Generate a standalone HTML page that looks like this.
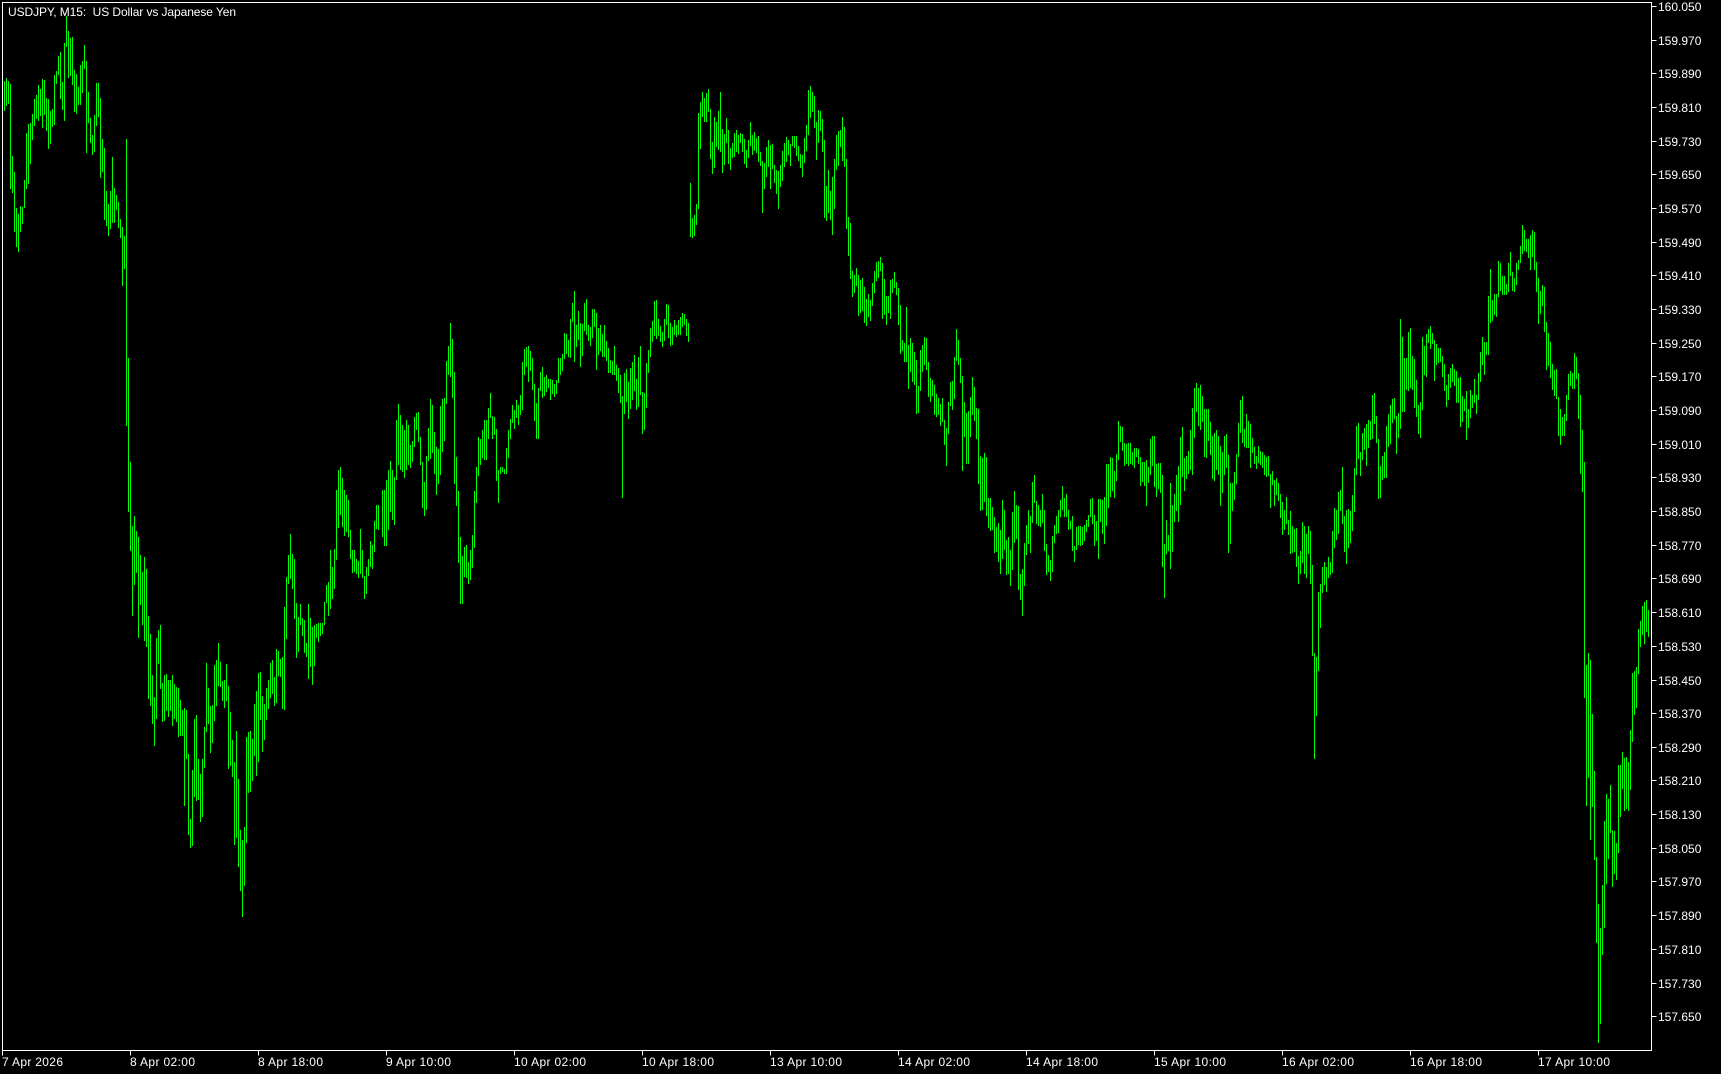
<!DOCTYPE html>
<html><head><meta charset="utf-8"><title>USDJPY, M15</title>
<style>
html,body{margin:0;padding:0;background:#000;width:1721px;height:1074px;overflow:hidden}
svg{display:block;position:absolute;left:0;top:0}
text{font-family:"Liberation Sans",sans-serif;font-size:12px;fill:#fff}
</style></head><body>
<svg width="1721" height="1074" viewBox="0 0 1721 1074" xmlns="http://www.w3.org/2000/svg">
<rect width="1721" height="1074" fill="#000"/>
<path transform="translate(.5 0)" shape-rendering="crispEdges" fill="none" stroke="#00ff00" stroke-width="1" d="M4 81V111M6 78V106M8 81V104M10 84V189M12 156V193M14 172V232M16 208V247M18 214V252M20 206V232M22 207V224M24 180V208M26 133V189M28 124V184M30 123V164M32 114V140M34 99V126M36 95V119M38 85V121M40 89V116M42 79V128M44 80V115M46 98V131M48 99V149M50 111V144M52 109V127M54 75V125M56 71V84M58 56V75M60 52V99M62 82V110M64 43V121M66 16V47M68 31V78M70 38V76M72 37V85M74 70V112M76 74V114M78 87V105M80 65V105M82 61V93M84 45V69M86 61V153M88 92V123M90 118V143M92 135V155M94 115V152M96 83V126M98 83V117M100 98V178M102 139V172M104 148V220M106 191V226M108 204V236M110 191V229M112 157V223M114 188V223M116 195V210M118 202V228M120 219V238M122 227V286M124 236V269M126 139V426M128 358V512M130 462V551M132 526V616M134 516V585M136 531V573M138 537V638M140 555V605M142 572V625M144 557V641M146 569V647M148 616V699M150 634V706M152 675V724M154 697V746M156 638V719M158 630V664M160 625V689M162 683V722M164 675V721M166 674V711M168 680V717M170 680V711M172 675V726M174 684V719M176 687V722M178 688V737M180 700V736M182 710V736M184 708V806M186 710V759M188 754V835M190 819V848M192 770V846M194 719V797M196 715V801M198 759V800M200 774V822M202 759V817M204 727V768M206 663V732M208 688V724M210 706V753M212 705V743M214 665V721M216 660V706M218 643V686M220 662V687M222 681V701M224 680V708M226 664V701M228 686V769M230 712V766M232 740V777M234 762V845M236 731V838M238 779V867M240 830V891M242 840V917M244 827V886M246 737V843M248 732V793M250 731V792M252 739V781M254 704V756M256 691V776M258 673V762M260 672V720M262 696V752M264 704V740M266 688V720M268 680V709M270 663V698M272 660V694M274 677V706M276 649V703M278 651V676M280 659V677M282 657V709M284 607V710M286 577V639M288 555V584M290 534V579M292 554V589M294 559V619M296 603V658M298 617V652M300 604V625M302 618V636M304 620V653M306 643V657M308 604V679M310 618V667M312 627V685M314 625V666M316 624V638M318 623V642M320 623V636M322 623V634M324 602V625M326 585V603M328 582V616M330 550V609M332 567V599M334 549V589M336 490V560M338 470V528M340 467V515M342 478V527M344 490V536M346 495V532M348 500V537M350 530V559M352 550V573M354 550V572M356 559V574M358 561V578M360 529V574M362 550V578M364 576V599M366 567V594M368 559V576M370 541V567M372 545V569M374 521V552M376 505V529M378 505V530M382 490V537M384 490V546M386 480V546M388 470V530M390 461V512M392 470V520M394 477V525M396 420V480M398 404V465M400 415V470M402 425V472M404 430V478M406 420V470M408 425V465M410 445V468M412 441V462M414 417V447M416 413V430M418 412V442M420 437V465M422 462V508M424 482V516M426 456V510M428 428V461M430 399V459M432 405V453M434 432V474M436 447V495M438 449V484M440 406V475M442 399V452M444 398V441M446 361V404M448 346V375M450 323V377M452 339V398M454 372V484M456 457V506M458 491V563M460 537V604M462 556V604M464 547V577M466 545V578M468 562V584M470 550V580M472 535V568M474 491V548M476 467V503M478 437V476M480 439V465M482 430V458M484 420V460M486 420V460M488 408V439M490 393V418M492 416V439M494 417V435M496 429V481M498 470V503M500 467V474M502 467V472M504 469V474M506 448V474M508 430V458M510 419V439M512 405V423M514 410V429M516 400V418M518 405V425M520 395V415M522 362V410M524 349V375M526 347V367M528 346V382M530 351V371M532 358V390M534 384V421M536 403V439M538 388V439M540 372V391M542 367V398M544 377V396M546 375V392M548 379V388M550 379V400M552 380V394M554 384V397M556 380V394M558 358V383M560 358V375M562 354V371M564 333V359M566 334V354M568 340V357M570 319V358M572 303V322M574 291V362M576 325V347M578 311V340M580 323V367M582 324V356M584 303V331M586 299V335M588 325V341M590 327V346M592 309V338M594 309V327M596 313V370M598 328V355M600 325V351M602 334V357M604 325V357M606 341V361M608 348V373M610 360V373M612 361V375M614 346V375M616 365V381M618 368V393M620 375V403M622 396V498M624 373V414M626 369V402M628 382V419M630 368V409M632 362V400M634 355V391M636 379V410M638 357V407M640 346V395M642 392V434M644 393V430M646 363V408M648 350V373M650 328V357M652 321V342M654 301V336M656 300V339M658 319V336M660 326V342M662 332V347M664 319V341M666 304V325M668 305V338M670 323V346M672 327V345M674 320V335M676 325V337M678 320V335M680 317V335M682 313V327M684 314V325M686 319V336M688 323V342M690 183V237M692 218V238M694 215V236M696 204V225M698 113V209M700 102V149M702 92V117M704 98V122M706 93V122M708 89V112M710 109V159M712 142V174M714 117V168M716 122V147M718 111V150M720 92V152M722 129V173M724 134V165M726 118V143M728 130V164M730 148V170M732 143V158M734 133V157M736 130V152M738 135V154M740 133V143M742 134V152M744 139V164M746 150V168M748 140V158M750 122V146M752 135V155M754 132V151M756 138V153M758 136V162M760 152V166M762 161V213M764 163V189M766 147V177M768 140V167M770 145V189M772 144V169M774 165V183M776 170V194M778 171V209M780 165V187M782 151V181M784 143V167M786 137V162M788 140V155M790 144V166M792 136V146M794 136V148M796 136V156M798 146V161M800 154V168M802 155V177M804 138V163M806 125V151M808 90V135M810 86V118M812 92V112M814 96V128M816 122V160M818 110V143M820 111V131M822 119V152M824 140V218M826 186V221M828 170V213M830 191V220M832 177V235M834 159V209M836 135V170M838 131V166M840 130V147M842 117V161M844 127V167M846 159V229M848 217V256M850 223V279M852 271V297M854 275V293M856 268V286M858 275V316M860 280V313M862 278V311M864 287V323M866 299V326M868 294V317M870 300V321M872 283V306M874 271V293M876 262V281M878 261V278M880 257V271M882 263V319M884 279V315M886 296V325M888 296V313M890 280V319M892 279V293M894 272V288M896 282V295M898 288V325M900 305V354M902 340V351M904 343V362M906 307V362M908 345V389M910 338V372M912 343V382M914 352V385M916 360V414M918 386V413M920 350V391M922 345V372M924 337V365M926 338V370M928 362V397M930 378V402M932 380V396M934 385V415M936 394V417M938 398V415M940 404V426M942 398V422M944 420V445M946 428V466M948 402V434M950 382V406M952 381V410M954 357V399M956 329V361M958 340V365M960 358V383M962 376V471M964 402V437M966 413V464M968 411V464M970 397V437M972 377V415M974 387V421M976 408V439M978 409V484M980 456V511M982 458V510M984 453V502M986 457V516M988 498V528M990 498V531M992 507V530M994 517V553M996 527V552M998 523V562M1000 530V574M1002 500V559M1004 510V550M1006 540V575M1008 537V574M1010 550V586M1012 512V570M1014 491V543M1016 505V539M1018 506V590M1020 574V600M1022 569V616M1024 543V586M1026 525V555M1028 510V544M1030 516V553M1032 482V523M1034 475V503M1036 501V524M1038 505V526M1040 510V527M1042 494V523M1044 510V551M1046 544V575M1048 555V572M1050 560V581M1052 536V572M1054 525V543M1056 516V534M1058 510V533M1060 500V517M1062 486V510M1064 498V517M1066 494V517M1068 510V530M1070 521V529M1072 516V551M1074 546V562M1076 527V550M1078 526V545M1080 526V546M1082 527V545M1084 525V541M1086 520V532M1088 515V527M1090 499V517M1092 498V524M1094 515V546M1096 521V541M1098 499V559M1100 499V522M1102 500V534M1104 497V544M1106 464V526M1108 464V508M1110 457V497M1112 458V491M1114 471V498M1116 454V481M1118 421V460M1120 426V442M1122 427V451M1124 443V466M1126 444V464M1128 443V466M1130 443V464M1132 452V465M1134 448V468M1136 448V457M1138 449V464M1140 457V486M1142 462V482M1144 462V486M1146 460V506M1148 467V483M1150 439V475M1152 436V466M1154 436V487M1156 464V497M1158 463V489M1160 463V493M1162 475V567M1164 544V598M1166 520V554M1168 535V551M1170 483V569M1172 505V552M1174 494V522M1176 475V511M1178 466V522M1180 437V505M1182 427V477M1184 458V491M1186 456V479M1188 451V474M1190 430V470M1192 408V475M1194 388V438M1196 383V412M1198 388V426M1200 385V430M1202 396V422M1204 409V457M1206 409V458M1208 409V441M1210 422V455M1212 436V479M1214 433V481M1216 430V470M1218 436V475M1220 446V506M1222 452V493M1224 436V475M1226 434V468M1228 455V553M1230 483V544M1232 483V511M1234 472V500M1236 454V484M1238 423V457M1240 400V433M1242 396V443M1244 429V447M1246 414V448M1248 421V448M1250 424V468M1252 438V453M1254 447V464M1256 456V469M1258 446V463M1260 451V465M1262 452V468M1264 455V475M1266 457V477M1268 456V476M1270 474V508M1272 471V485M1274 480V506M1276 478V495M1278 483V501M1280 494V518M1282 502V535M1284 510V530M1286 497V524M1288 520V535M1290 511V554M1292 526V553M1294 529V552M1296 528V567M1298 556V584M1300 551V574M1302 522V563M1304 526V574M1306 534V578M1308 526V554M1310 531V584M1312 565V656M1314 653V759M1316 657V716M1318 592V671M1320 584V628M1322 567V593M1324 562V585M1326 567V592M1328 557V578M1330 562V575M1332 531V573M1334 508V548M1336 510V540M1338 492V534M1340 490V511M1342 467V524M1344 516V552M1346 510V564M1348 509V548M1350 511V543M1352 495V531M1354 468V512M1356 426V475M1358 423V459M1360 452V476M1362 433V460M1364 428V450M1366 424V466M1368 420V448M1370 421V440M1372 395V439M1374 393V424M1376 416V443M1378 439V499M1380 466V498M1382 456V480M1384 452V478M1386 426V478M1388 414V447M1390 405V444M1392 399V423M1394 398V419M1396 416V454M1398 413V438M1400 319V429M1402 337V412M1404 358V412M1406 358V390M1408 332V391M1410 328V388M1412 356V390M1414 359V408M1416 380V417M1418 405V434M1420 402V438M1422 337V410M1424 346V375M1426 334V377M1428 329V343M1430 326V349M1432 333V344M1434 340V381M1436 344V365M1438 348V363M1440 348V362M1442 356V377M1444 364V391M1446 385V407M1448 374V400M1450 368V388M1452 364V382M1454 369V386M1456 371V403M1458 378V403M1460 377V427M1462 396V422M1464 399V411M1466 391V440M1468 409V428M1470 390V418M1472 395V408M1474 379V403M1476 395V414M1478 373V400M1480 352V382M1482 337V365M1484 342V375M1486 342V355M1488 296V355M1490 269V323M1492 300V321M1494 294V315M1496 294V317M1498 261V297M1500 263V291M1502 276V295M1504 276V295M1506 284V295M1508 263V292M1510 252V276M1512 272V291M1514 278V292M1516 263V285M1518 260V270M1520 246V263M1522 225V254M1524 230V251M1526 239V252M1528 239V258M1530 235V270M1532 230V257M1534 232V270M1536 262V292M1538 278V324M1540 291V314M1542 285V306M1544 287V332M1546 322V370M1548 333V366M1550 342V378M1552 364V390M1554 370V396M1556 369V399M1558 397V436M1560 409V445M1562 417V436M1564 414V436M1566 395V421M1568 374V400M1570 371V386M1572 373V389M1574 353V389M1576 357V379M1578 373V419M1580 395V474M1582 430V492M1584 462V698M1586 665V806M1588 653V778M1590 660V840M1592 714V807M1594 771V860M1596 857V943M1598 904V1043M1600 928V1024M1602 885V955M1604 821V928M1606 794V884M1608 799V859M1610 785V833M1612 830V887M1614 831V874M1616 843V880M1618 765V853M1620 765V817M1622 752V789M1624 758V811M1626 757V809M1628 762V811M1630 730V790M1632 673V742M1634 671V715M1636 667V708M1638 629V674M1640 621V647M1642 606V635M1644 602V644M1646 600V632M1648 610V637"/>
<path transform="translate(.5 .5)" shape-rendering="crispEdges" fill="none" stroke="#fff" stroke-width="1" d="M2 2H1651V1050H2ZM1651 6H1656M1651 40H1656M1651 73H1656M1651 107H1656M1651 141H1656M1651 174H1656M1651 208H1656M1651 242H1656M1651 275H1656M1651 309H1656M1651 343H1656M1651 376H1656M1651 410H1656M1651 444H1656M1651 477H1656M1651 511H1656M1651 545H1656M1651 578H1656M1651 612H1656M1651 646H1656M1651 680H1656M1651 713H1656M1651 747H1656M1651 780H1656M1651 814H1656M1651 848H1656M1651 881H1656M1651 915H1656M1651 949H1656M1651 983H1656M1651 1016H1656M2 1050V1055M130 1050V1055M258 1050V1055M386 1050V1055M514 1050V1055M642 1050V1055M770 1050V1055M898 1050V1055M1026 1050V1055M1154 1050V1055M1282 1050V1055M1410 1050V1055M1538 1050V1055"/>
<text x="8" y="16" textLength="228">USDJPY, M15:&#160; US Dollar vs Japanese Yen</text>
<text x="1658" y="11">160.050</text>
<text x="1658" y="45">159.970</text>
<text x="1658" y="78">159.890</text>
<text x="1658" y="112">159.810</text>
<text x="1658" y="146">159.730</text>
<text x="1658" y="179">159.650</text>
<text x="1658" y="213">159.570</text>
<text x="1658" y="247">159.490</text>
<text x="1658" y="280">159.410</text>
<text x="1658" y="314">159.330</text>
<text x="1658" y="348">159.250</text>
<text x="1658" y="381">159.170</text>
<text x="1658" y="415">159.090</text>
<text x="1658" y="449">159.010</text>
<text x="1658" y="482">158.930</text>
<text x="1658" y="516">158.850</text>
<text x="1658" y="550">158.770</text>
<text x="1658" y="583">158.690</text>
<text x="1658" y="617">158.610</text>
<text x="1658" y="651">158.530</text>
<text x="1658" y="685">158.450</text>
<text x="1658" y="718">158.370</text>
<text x="1658" y="752">158.290</text>
<text x="1658" y="785">158.210</text>
<text x="1658" y="819">158.130</text>
<text x="1658" y="853">158.050</text>
<text x="1658" y="886">157.970</text>
<text x="1658" y="920">157.890</text>
<text x="1658" y="954">157.810</text>
<text x="1658" y="988">157.730</text>
<text x="1658" y="1021">157.650</text>
<text x="2" y="1066" textLength="61">7 Apr 2026</text>
<text x="130" y="1066" textLength="65">8 Apr 02:00</text>
<text x="258" y="1066" textLength="65">8 Apr 18:00</text>
<text x="386" y="1066" textLength="65">9 Apr 10:00</text>
<text x="514" y="1066" textLength="72">10 Apr 02:00</text>
<text x="642" y="1066" textLength="72">10 Apr 18:00</text>
<text x="770" y="1066" textLength="72">13 Apr 10:00</text>
<text x="898" y="1066" textLength="72">14 Apr 02:00</text>
<text x="1026" y="1066" textLength="72">14 Apr 18:00</text>
<text x="1154" y="1066" textLength="72">15 Apr 10:00</text>
<text x="1282" y="1066" textLength="72">16 Apr 02:00</text>
<text x="1410" y="1066" textLength="72">16 Apr 18:00</text>
<text x="1538" y="1066" textLength="72">17 Apr 10:00</text>
</svg>
</body></html>
